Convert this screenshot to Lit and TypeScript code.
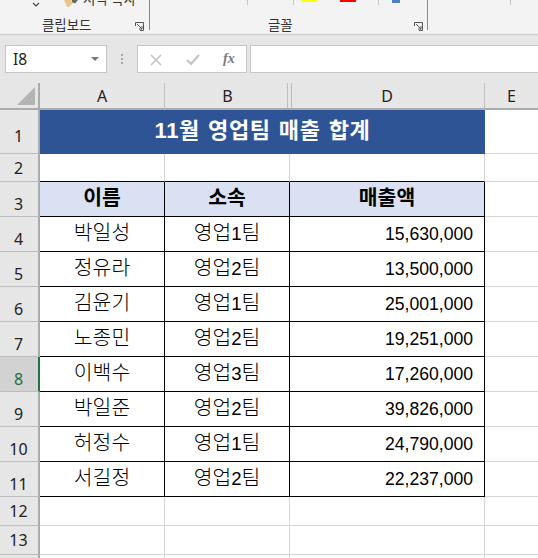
import { LitElement, html, css, svg } from "lit";
import { customElement } from "lit/decorators.js";

const people = [
  ["박일성", 1, "15,630,000"],
  ["정유라", 2, "13,500,000"],
  ["김윤기", 1, "25,001,000"],
  ["노종민", 2, "19,251,000"],
  ["이백수", 3, "17,260,000"],
  ["박일준", 2, "39,826,000"],
  ["허정수", 1, "24,790,000"],
  ["서길정", 2, "22,237,000"],
];

const launcher = svg`<svg class="launcher" width="9" height="9" viewBox="0 0 9 9" fill="none" stroke="#555" stroke-width="1"><path d="M.5 4V.5H8.5V8.5H5"/><path d="M2 2L7 7M7 4V7H4"/></svg>`;

@customElement("app-root")
export class AppRoot extends LitElement {
  static styles = css`
    :host { display: block; width: 538px; height: 558px; overflow: hidden; background: #fff;
      font-family: "Liberation Sans", "Noto Sans CJK KR", sans-serif; color: #000; position: relative; }
    .ribbon { height: 34px; background: #f3f3f3; border-bottom: 1px solid #c6c6c6; display: flex; position: relative; overflow: hidden; }
    .group { position: relative; flex: none; box-sizing: border-box; }
    .g1 { width: 150px; border-right: 1px solid #8a8a8a; height: 30px; }
    .g2 { width: 278px; border-right: 1px solid #8a8a8a; height: 30px; }
    .g3 { flex: 1; height: 30px; }
    .label { position: absolute; top: 17px; text-align: center; font-size: 13.4px; line-height: 18px; color: #333; white-space: nowrap; }
    .g1 .label { left: 42px; }
    .g2 .label { left: 118px; }
    .launcher { position: absolute; right: 4px; top: 22px; }
    .g1 .launcher { right: 5px; }
    .copy { position: absolute; left: 83px; top: -9px; font-size: 13.4px; line-height: 18px; color: #333; white-space: nowrap; }
    .brush { position: absolute; left: 63px; top: 0; }
    .chev { position: absolute; left: 32px; top: 2px; }
    .tick { position: absolute; top: 0; width: 1px; height: 5px; background: #c6c6c6; }
    .t1 { left: 97px; } .t2 { left: 143px; } .t3 { left: 228px; } .t4 { left: 82px; }
    .swatch { position: absolute; top: 0; width: 16px; height: 2px; }
    .yellow { left: 151px; background: #ffff00; }
    .red { left: 190px; background: #ff0000; }
    .blue { left: 242px; width: 8px; height: 3px; background: #4f81bd; }
    .fbar { height: 48px; background: #e6e6e6; box-sizing: border-box; padding: 10px 0 10px 5px; display: flex; align-items: stretch; }
    .box { background: #fff; border: 1px solid #c6c6c6; box-sizing: border-box; height: 28px; display: flex; align-items: center; }
    .name { width: 102px; padding: 0 7px; justify-content: space-between; font-size: 15.5px; color: #222; font-family: "Noto Sans", sans-serif; }
    .caret { width: 0; height: 0; border-left: 4px solid transparent; border-right: 4px solid transparent; border-top: 4px solid #777; }
    .dots { width: 30px; display: flex; flex-direction: column; align-items: center; justify-content: center; gap: 2px; }
    .dots i { display: block; width: 2px; height: 2px; background: #a8a8a8; }
    .ctrl { width: 110px; position: relative; margin-right: 3px; }
    .ctrl svg { position: absolute; top: 8px; }
    .x { left: 12px; } .check { left: 48px; }
    .fx { position: absolute; left: 85px; top: 4px; font: italic bold 14px/18px "Liberation Serif", serif; color: #7a7a7a; }
    .input { flex: 1; border-right: none; }
    .sheet { display: grid; grid-template-columns: 40px 125px 125px 195px 53px; grid-template-rows: 27px 44px 28px 35px repeat(8, 35px) 29px 29px 29px; }
    .cell { box-sizing: border-box; border-right: 1px solid #d4d4d4; border-bottom: 1px solid #d4d4d4; display: flex; align-items: center; justify-content: center; font-size: 20.4px; line-height: 1; padding-bottom: 3px; white-space: nowrap; overflow: hidden; }
    .colh, .rowh { background: #e6e6e6; color: #222; font-size: 16px; border-right: 1px solid #ababab; border-bottom: 1px solid #ababab; font-family: "Noto Sans", sans-serif; }
    .colh { border-bottom: 2px solid #ababab; padding: 1px 0 0; border-right: 1px solid #c0c0c0; position: relative; }
    .rowh { border-right: 2px solid #ababab; border-bottom: 1px solid #bdbdbd; padding: 9px 1px 0 0; align-items: center; }
    .rowh.small { padding: 0 1px 0 0; }
    .rowh.sel { background: #d2d2d2; color: #1e6b46; border-right: 2px solid #217346; }
    .corner { position: relative; background: #e6e6e6; border-right: 2px solid #ababab; border-bottom: 2px solid #ababab; padding: 0; }
    .corner::after { content: ""; position: absolute; right: 3px; bottom: 3px; width: 0; height: 0; border-left: 18px solid transparent; border-bottom: 18px solid #b4b4b4; }
    .colh.b { border-right: none; }
    .colh.b::before { content: ""; position: absolute; top: 0; bottom: 0; right: 2px; width: 1px; background: #bdbdbd; }
    .colh.d::before { content: ""; position: absolute; left: 1px; top: 0; bottom: 0; width: 1px; background: #bdbdbd; }
    .title { grid-column: 2 / 5; background: #2f5496; color: #fff; font-weight: 700; font-size: 22px; letter-spacing: 0.6px; word-spacing: 1.5px; border: none; padding-bottom: 2px; }
    .data { border-right: 1px solid #000; border-bottom: 1px solid #000; }
    .head { background: #d9e1f2; font-weight: 700; padding-bottom: 1px; }
    .name-cell { padding-bottom: 1px; font-weight: 300; }
    .digit { font-size: 18.6px; }
    .num { justify-content: flex-end; padding-right: 11px; font-size: 17.6px; padding-bottom: 0; padding-top: 1px; }
    .cell.last { border-right: none; }
    .brow { border-bottom-color: #000; }
  `;

  render() {
    return html`
      <div class="ribbon">
        <div class="group g1">
          <svg class="chev" width="8" height="6" viewBox="0 0 8 6" fill="none" stroke="#444" stroke-width="1.2"><path d="M1 1L4 4L7 1"/></svg>
          <svg class="brush" width="18" height="8" viewBox="0 0 18 8"><path d="M1 0H9L8 2L13 0H14L10 3L6 7H4Z" fill="#e8c58a"/><path d="M9 0H15L12 3.5L9 2Z" fill="#666"/></svg>
          <span class="copy">서식 복사</span>
          <span class="label">클립보드</span>
          ${launcher}
        </div>
        <div class="group g2">
          <span class="tick t1"></span>
          <span class="tick t2"></span>
          <span class="tick t3"></span>
          <span class="swatch yellow"></span>
          <span class="swatch red"></span>
          <span class="swatch blue"></span>
          <span class="label">글꼴</span>
          ${launcher}
        </div>
        <div class="group g3"><span class="tick t4"></span></div>
      </div>
      <div class="fbar">
        <div class="box name"><span>I8</span><span class="caret"></span></div>
        <div class="dots"><i></i><i></i><i></i></div>
        <div class="box ctrl">
          <svg class="x" width="12" height="12" viewBox="0 0 12 12" stroke="#c4c4c4" stroke-width="1.6" fill="none"><path d="M1 1L11 11M11 1L1 11"/></svg>
          <svg class="check" width="14" height="12" viewBox="0 0 14 12" stroke="#c4c4c4" stroke-width="2.2" fill="none"><path d="M1 6L5 10L13 1"/></svg>
          <span class="fx">fx</span>
        </div>
        <div class="box input"></div>
      </div>
      <div class="sheet">
        <div class="cell corner"></div>
        <div class="cell colh">A</div>
        <div class="cell colh b">B</div>
        <div class="cell colh d">D</div>
        <div class="cell colh last">E</div>

        <div class="cell rowh">1</div>
        <div class="cell title">11월 영업팀 매출 합계</div>
        <div class="cell last"></div>

        <div class="cell rowh small">2</div>
        <div class="cell brow"></div><div class="cell brow"></div><div class="cell brow"></div><div class="cell last"></div>

        <div class="cell rowh">3</div>
        <div class="cell data head">이름</div><div class="cell data head">소속</div><div class="cell data head">매출액</div><div class="cell last"></div>

        ${people.map((p, i) => html`
          <div class="cell rowh ${i === 4 ? "sel" : ""}">${i + 4}</div>
          <div class="cell data name-cell">${p[0]}</div>
          <div class="cell data name-cell"><span>영업<span class="digit">${p[1]}</span>팀</span></div>
          <div class="cell data num">${p[2]}</div>
          <div class="cell last"></div>
        `)}

        ${[12, 13, 14].map((n) => html`
          <div class="cell rowh small">${n === 14 ? "" : n}</div>
          <div class="cell"></div><div class="cell"></div><div class="cell"></div><div class="cell last"></div>
        `)}
      </div>
    `;
  }
}
